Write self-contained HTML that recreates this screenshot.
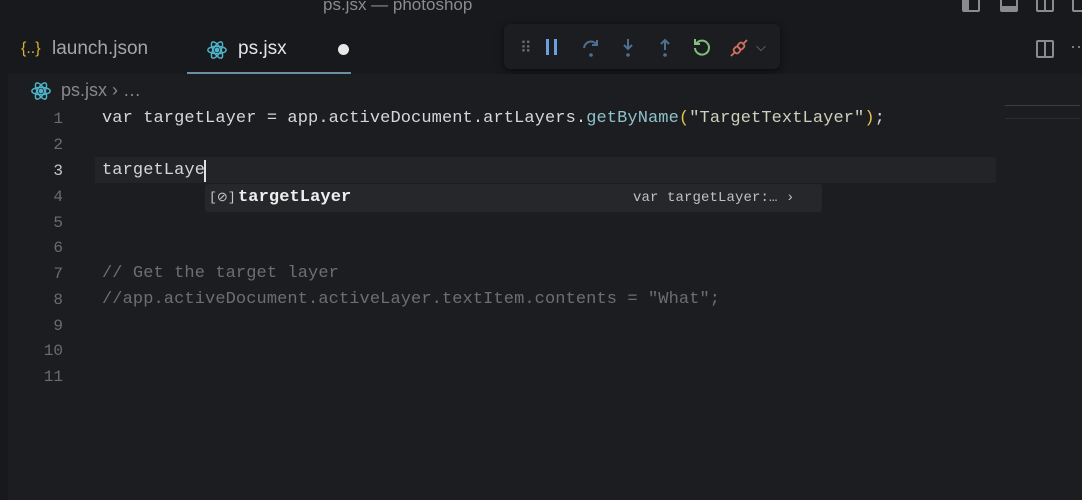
<!DOCTYPE html>
<html><head><style>
body{margin:0;width:1082px;height:500px;background:#18191c;overflow:hidden;position:relative;font-family:"Liberation Sans",sans-serif;}
.a{position:absolute}
.editor{left:8px;top:74px;width:1074px;height:426px;background:#1c1d20}
.code{font-family:"Liberation Mono",monospace;font-size:17px;letter-spacing:0.1px;color:#d6d6d6;white-space:pre}
.ln{font-family:"Liberation Mono",monospace;font-size:16px;color:#6a6c70;width:30px;text-align:right;left:33px}
.tab{font-size:19px;top:38px}
</style></head><body>
<div class="a" style="left:323px;top:-5px;color:#8a8b8f;font-size:17px">ps.jsx — photoshop</div>
<!-- window icons -->
<div class="a" style="left:962px;top:-6px;width:18px;height:18px;border:2px solid #8a8b8f;border-radius:2px;box-sizing:border-box;border-left-width:7px"></div>
<div class="a" style="left:1000px;top:-6px;width:18px;height:18px;border:2px solid #8a8b8f;border-radius:2px;box-sizing:border-box;border-bottom-width:6px"></div>
<div class="a" style="left:1036px;top:-6px;width:18px;height:18px;border:2px solid #8a8b8f;border-radius:2px;box-sizing:border-box"></div>
<div class="a" style="left:1044px;top:-6px;width:2px;height:18px;background:#8a8b8f"></div>
<div class="a" style="left:1072px;top:-6px;width:18px;height:18px;border:2px solid #8a8b8f;border-radius:2px;box-sizing:border-box"></div>
<!-- tabs -->
<div class="a tab" style="left:21px;color:#d7b23e;font-size:16px;top:40px">{..}</div>
<div class="a tab" style="left:52px;color:#a4a5a9">launch.json</div>
<div class="a" style="left:187px;top:72px;width:164px;height:2px;background:#6d8fa6"></div>
<svg class="a" style="left:206px;top:39px" width="22" height="22" viewBox="0 0 24 24" fill="none" stroke="#4fb3c9" stroke-width="1.6"><ellipse cx="12" cy="12" rx="10" ry="4"/><ellipse cx="12" cy="12" rx="10" ry="4" transform="rotate(60 12 12)"/><ellipse cx="12" cy="12" rx="10" ry="4" transform="rotate(120 12 12)"/><circle cx="12" cy="12" r="1.8" fill="#4fb3c9"/></svg>
<div class="a tab" style="left:238px;color:#e4e4e6">ps.jsx</div>
<div class="a" style="left:338px;top:44px;width:11px;height:11px;border-radius:50%;background:#e8e8e8"></div>
<!-- debug toolbar -->
<div class="a" style="left:504px;top:24px;width:276px;height:45px;background:#1c1d21;border-radius:6px;box-shadow:0 2px 8px rgba(0,0,0,.6)"></div>
<div class="a" style="left:520px;top:38px;color:#6a6c70;font-size:16px;letter-spacing:-2px">⠿</div>
<div class="a" style="left:546px;top:39px;width:3px;height:16px;background:#6aa0e0"></div>
<div class="a" style="left:554px;top:39px;width:3px;height:16px;background:#6aa0e0"></div>
<svg class="a" style="left:580px;top:37px" width="22" height="22" viewBox="0 0 22 22" fill="none" stroke="#4f6f90" stroke-width="2"><path d="M4 11a7 7 0 0 1 13-3"/><path d="M17 3v5h-5"/><circle cx="11" cy="18" r="1.8" fill="#4f6f90" stroke="none"/></svg>
<svg class="a" style="left:617px;top:37px" width="22" height="22" viewBox="0 0 22 22" fill="none" stroke="#4f6f90" stroke-width="2"><path d="M11 2v10M7 8l4 4 4-4"/><circle cx="11" cy="18" r="1.8" fill="#4f6f90" stroke="none"/></svg>
<svg class="a" style="left:654px;top:37px" width="22" height="22" viewBox="0 0 22 22" fill="none" stroke="#4f6f90" stroke-width="2"><path d="M11 13V3M7 7l4-4 4 4"/><circle cx="11" cy="18" r="1.8" fill="#4f6f90" stroke="none"/></svg>
<svg class="a" style="left:691px;top:36px" width="22" height="22" viewBox="0 0 22 22" fill="none" stroke="#7fc27a" stroke-width="2"><path d="M5 8a7 7 0 1 1-1 4"/><path d="M4 3v5h5"/></svg>
<svg class="a" style="left:728px;top:37px" width="22" height="22" viewBox="0 0 22 22" fill="none" stroke="#d0705e" stroke-width="1.8"><path d="M3 19l4-4M19 3l-4 4"/><rect x="6" y="10" width="6" height="6" rx="2" transform="rotate(-45 9 13)"/><rect x="10" y="6" width="6" height="6" rx="2" transform="rotate(-45 13 9)"/></svg>
<div class="a" style="left:756px;top:39px;color:#8a8b8f;font-size:13px">⌵</div>
<!-- split / more -->
<div class="a" style="left:1036px;top:40px;width:18px;height:18px;border:2px solid #8a8b8f;border-radius:2px;box-sizing:border-box"></div>
<div class="a" style="left:1044px;top:40px;width:2px;height:18px;background:#8a8b8f"></div>
<div class="a" style="left:1070px;top:36px;color:#8a8b8f;font-size:18px">··</div>
<!-- editor -->
<div class="a editor"></div>
<svg class="a" style="left:30px;top:80px" width="22" height="22" viewBox="0 0 24 24" fill="none" stroke="#4fb3c9" stroke-width="1.6"><ellipse cx="12" cy="12" rx="10" ry="4"/><ellipse cx="12" cy="12" rx="10" ry="4" transform="rotate(60 12 12)"/><ellipse cx="12" cy="12" rx="10" ry="4" transform="rotate(120 12 12)"/><circle cx="12" cy="12" r="1.8" fill="#4fb3c9"/></svg>
<div class="a" style="left:61px;top:80px;color:#86878b;font-size:18px">ps.jsx › …</div>
<div class="a" style="left:95px;top:157px;width:901px;height:26px;background:#232428"></div>
<div class="a" style="left:1005px;top:105px;width:75px;height:1px;background:#3c3d41"></div>
<div class="a" style="left:1005px;top:118px;width:75px;height:1px;background:#2c2d31"></div>
<div class="a ln" style="top:110px">1</div>
<div class="a ln" style="top:136px">2</div>
<div class="a ln" style="top:162px;color:#c8c8c8">3</div>
<div class="a ln" style="top:188px">4</div>
<div class="a ln" style="top:214px">5</div>
<div class="a ln" style="top:239px">6</div>
<div class="a ln" style="top:265px">7</div>
<div class="a ln" style="top:291px">8</div>
<div class="a ln" style="top:317px">9</div>
<div class="a ln" style="top:342px">10</div>
<div class="a ln" style="top:368px">11</div>
<div class="a code" style="left:102px;top:109px">var targetLayer = app.activeDocument.artLayers.<span style="color:#8fc1c9">getByName</span><span style="color:#e6c04a">(</span><span style="color:#cfcfbd">"TargetTextLayer"</span><span style="color:#e6c04a">)</span>;</div>
<div class="a code" style="left:102px;top:161px">targetLaye</div>
<div class="a" style="left:204px;top:160px;width:2px;height:22px;background:#e0e0e0"></div>
<div class="a code" style="left:102px;top:264px;color:#6c6e72">// Get the target layer</div>
<div class="a code" style="left:102px;top:290px;color:#6c6e72">//app.activeDocument.activeLayer.textItem.contents = "What";</div>
<!-- suggest -->
<div class="a" style="left:205px;top:184px;width:617px;height:28px;background:#26272b;border-radius:3px"></div>
<div class="a code" style="left:209px;top:190px;font-size:13px;color:#c8c8c8">[⊘]</div>
<div class="a code" style="left:238px;top:188px;font-weight:bold;color:#eeeeee">targetLayer</div>
<div class="a code" style="left:633px;top:190px;font-size:14px;color:#c0c0c0">var targetLayer:… ›</div>
</body></html>
